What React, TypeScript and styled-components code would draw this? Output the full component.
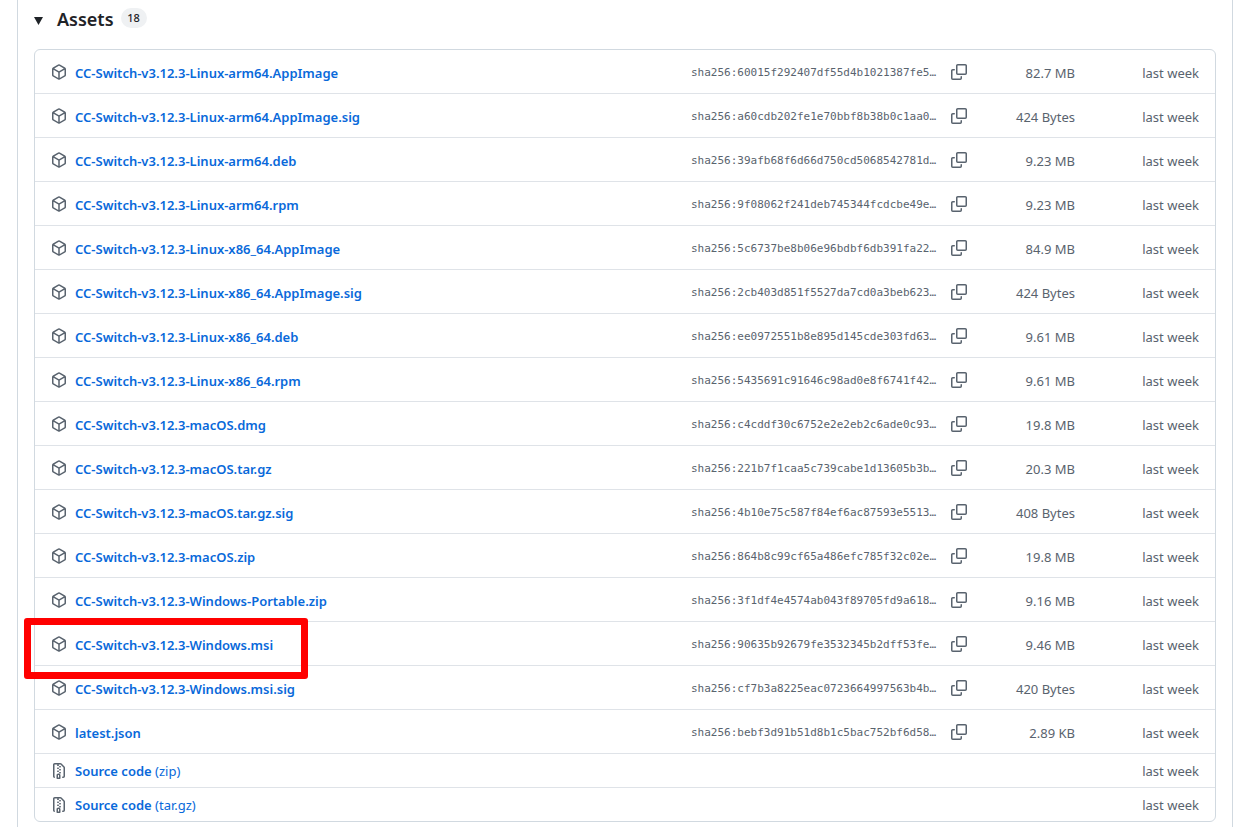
import React from "react";
import styled, { createGlobalStyle } from "styled-components";

const GlobalStyle = createGlobalStyle`
  *, *::before, *::after { box-sizing: border-box; }
  body {
    margin: 0;
    background: #ffffff;
    color: #1f2328;
    font-family: "Noto Sans", sans-serif;
    font-size: 13px;
    line-height: 20px;
  }
`;

const Release = styled.section`
  margin: 0 15px 0 17px;
  padding: 0 16px 16px;
  border: solid #d1d9e0;
  border-width: 0 1px;
`;

const Summary = styled.summary`
  display: flex;
  align-items: center;
  height: 36px;
  margin-bottom: 13px;
  cursor: pointer;
  list-style: none;
  &::-webkit-details-marker { display: none; }
`;

const Caret = styled.svg`
  width: 9px;
  height: 8px;
  margin: 6px 14px 0 0;
  fill: #1f2328;
`;

const Title = styled.h3`
  margin: 2px 7px 0 0;
  font-size: 18px;
  line-height: 28px;
  font-weight: 600;
`;

const Counter = styled.span`
  min-width: 26px;
  padding: 0 6px;
  border-radius: 10px;
  background: #eff1f3;
  font-size: 11px;
  font-weight: 500;
  text-align: center;
`;

const Card = styled.div`
  border: 1px solid #d1d9e0;
  border-radius: 6px;
`;

const Table = styled.table`
  width: 100%;
  table-layout: fixed;
  border-collapse: separate;
  border-spacing: 0;
`;

const Column = styled.col<{ $width?: number }>`
  width: ${(p) => (p.$width ? `${p.$width}px` : "auto")};
`;

const Row = styled.tr<{ $compact?: boolean }>`
  height: ${(p) => (p.$compact ? 34 : 44)}px;
  &:last-child { height: 33px; }
  &:not(:last-child) > td { border-bottom: 1px solid #dfe3e8; }
`;

const Cell = styled.td<{ $end?: boolean }>`
  position: relative;
  padding: 0 ${(p) => (p.$end ? 16 : 0)}px 0 0;
  color: #59636e;
  text-align: right;
  white-space: nowrap;
`;

const TextCell = styled(Cell)`
  padding-top: 2px;
`;

const NameCell = styled(Cell)`
  padding-left: 16px;
  text-align: left;
`;

const NameGroup = styled.div`
  display: flex;
  align-items: center;
  gap: 8px;
`;

const Icon = styled.svg`
  display: block;
  flex: none;
  width: 16px;
  height: 16px;
  fill: #59636e;
`;

const AssetLink = styled.a<{ $compact?: boolean }>`
  padding-top: ${(p) => (p.$compact ? 0 : 2)}px;
  color: #0969da;
  text-decoration: none;
  &:hover { text-decoration: underline; }
`;

const Name = styled.span`
  font-weight: 600;
`;

const DigestCell = styled(TextCell)`
  text-align: left;
  font-family: "DejaVu Sans Mono", monospace;
  font-size: 11px;
`;

const CopyButton = styled.button`
  display: block;
  padding: 0;
  border: 0;
  background: transparent;
  cursor: pointer;
`;

const Highlight = styled.span`
  position: absolute;
  top: -4px;
  left: -11px;
  z-index: 1;
  width: 284px;
  height: 61px;
  border: 7px solid #ff0000;
  border-radius: 3px;
  pointer-events: none;
`;

const PackageIcon = () => (
  <Icon viewBox="0 0 16 16" aria-hidden="true">
    <path d="m8.878.392 5.25 3.045c.54.314.872.89.872 1.514v6.098a1.75 1.75 0 0 1-.872 1.514l-5.25 3.045a1.75 1.75 0 0 1-1.756 0l-5.25-3.045A1.75 1.75 0 0 1 1 11.049V4.951c0-.624.332-1.201.872-1.514L7.122.392a1.75 1.75 0 0 1 1.756 0ZM7.875 1.69l-4.63 2.685L8 7.133l4.755-2.758-4.63-2.685a.248.248 0 0 0-.25 0ZM2.5 5.677v5.372c0 .09.047.171.125.216l4.625 2.683V8.432Zm6.25 8.271 4.625-2.683a.25.25 0 0 0 .125-.216V5.677L8.75 8.432Z" />
  </Icon>
);

const ZipIcon = () => (
  <Icon viewBox="0 0 16 16" aria-hidden="true">
    <path d="M3.5 1.75v11.5c0 .09.048.173.126.217a.75.75 0 0 1-.752 1.298A1.748 1.748 0 0 1 2 13.25V1.75C2 .784 2.784 0 3.75 0h5.586c.464 0 .909.185 1.237.513l2.914 2.914c.329.328.513.773.513 1.237v8.586A1.75 1.75 0 0 1 12.25 15h-.5a.75.75 0 0 1 0-1.5h.5a.25.25 0 0 0 .25-.25V4.664a.25.25 0 0 0-.073-.177L9.513 1.573a.25.25 0 0 0-.177-.073H7.25a.75.75 0 0 1 0 1.5h-.5a.75.75 0 0 1 0-1.5h-3a.25.25 0 0 0-.25.25Zm3.75 8.75h.5c.966 0 1.75.784 1.75 1.75v3a.75.75 0 0 1-.75.75h-2.5a.75.75 0 0 1-.75-.75v-3c0-.966.784-1.75 1.75-1.75ZM6 5.25a.75.75 0 0 1 .75-.75h.5a.75.75 0 0 1 0 1.5h-.5A.75.75 0 0 1 6 5.25Zm.75 2.25h.5a.75.75 0 0 1 0 1.5h-.5a.75.75 0 0 1 0-1.5ZM8 6.75A.75.75 0 0 1 8.75 6h.5a.75.75 0 0 1 0 1.5h-.5A.75.75 0 0 1 8 6.75ZM8.75 3h.5a.75.75 0 0 1 0 1.5h-.5a.75.75 0 0 1 0-1.5ZM8 9.75A.75.75 0 0 1 8.75 9h.5a.75.75 0 0 1 0 1.5h-.5A.75.75 0 0 1 8 9.75Zm-1 2.5v2.25h1v-2.25a.25.25 0 0 0-.25-.25h-.5a.25.25 0 0 0-.25.25Z" />
  </Icon>
);

const CopyIcon = () => (
  <Icon viewBox="0 0 16 16" aria-hidden="true">
    <path d="M0 6.75C0 5.784.784 5 1.75 5h1.5a.75.75 0 0 1 0 1.5h-1.5a.25.25 0 0 0-.25.25v7.5c0 .138.112.25.25.25h7.5a.25.25 0 0 0 .25-.25v-1.5a.75.75 0 0 1 1.5 0v1.5A1.75 1.75 0 0 1 9.25 16h-7.5A1.75 1.75 0 0 1 0 14.25Z" />
    <path d="M5 1.75C5 .784 5.784 0 6.75 0h7.5C15.216 0 16 .784 16 1.75v7.5A1.75 1.75 0 0 1 14.25 11h-7.5A1.75 1.75 0 0 1 5 9.25Zm1.75-.25a.25.25 0 0 0-.25.25v7.5c0 .138.112.25.25.25h7.5a.25.25 0 0 0 .25-.25v-7.5a.25.25 0 0 0-.25-.25Z" />
  </Icon>
);

interface Asset {
  name: string;
  digest: string;
  size: string;
  highlighted?: boolean;
}

const assets: Asset[] = [
  { name: "CC-Switch-v3.12.3-Linux-arm64.AppImage", digest: "60015f292407df55d4b1021387fe5", size: "82.7 MB" },
  { name: "CC-Switch-v3.12.3-Linux-arm64.AppImage.sig", digest: "a60cdb202fe1e70bbf8b38b0c1aa0", size: "424 Bytes" },
  { name: "CC-Switch-v3.12.3-Linux-arm64.deb", digest: "39afb68f6d66d750cd5068542781d", size: "9.23 MB" },
  { name: "CC-Switch-v3.12.3-Linux-arm64.rpm", digest: "9f08062f241deb745344fcdcbe49e", size: "9.23 MB" },
  { name: "CC-Switch-v3.12.3-Linux-x86_64.AppImage", digest: "5c6737be8b06e96bdbf6db391fa22", size: "84.9 MB" },
  { name: "CC-Switch-v3.12.3-Linux-x86_64.AppImage.sig", digest: "2cb403d851f5527da7cd0a3beb623", size: "424 Bytes" },
  { name: "CC-Switch-v3.12.3-Linux-x86_64.deb", digest: "ee0972551b8e895d145cde303fd63", size: "9.61 MB" },
  { name: "CC-Switch-v3.12.3-Linux-x86_64.rpm", digest: "5435691c91646c98ad0e8f6741f42", size: "9.61 MB" },
  { name: "CC-Switch-v3.12.3-macOS.dmg", digest: "c4cddf30c6752e2e2eb2c6ade0c93", size: "19.8 MB" },
  { name: "CC-Switch-v3.12.3-macOS.tar.gz", digest: "221b7f1caa5c739cabe1d13605b3b", size: "20.3 MB" },
  { name: "CC-Switch-v3.12.3-macOS.tar.gz.sig", digest: "4b10e75c587f84ef6ac87593e5513", size: "408 Bytes" },
  { name: "CC-Switch-v3.12.3-macOS.zip", digest: "864b8c99cf65a486efc785f32c02e", size: "19.8 MB" },
  { name: "CC-Switch-v3.12.3-Windows-Portable.zip", digest: "3f1df4e4574ab043f89705fd9a618", size: "9.16 MB" },
  { name: "CC-Switch-v3.12.3-Windows.msi", digest: "90635b92679fe3532345b2dff53fe", size: "9.46 MB", highlighted: true },
  { name: "CC-Switch-v3.12.3-Windows.msi.sig", digest: "cf7b3a8225eac0723664997563b4b", size: "420 Bytes" },
  { name: "latest.json", digest: "bebf3d91b51d8b1c5bac752bf6d58", size: "2.89 KB" },
];

const archives = ["zip", "tar.gz"];

export default function App() {
  return (
    <Release>
      <GlobalStyle />
      <details open>
        <Summary>
          <Caret viewBox="0 0 9 8" aria-hidden="true">
            <path d="M0 0h9L4.5 8Z" />
          </Caret>
          <Title>Assets</Title>
          <Counter>{assets.length + archives.length}</Counter>
        </Summary>
        <Card>
          <Table aria-label="Assets">
            <colgroup>
              <Column />
              <Column $width={260} />
              <Column $width={28} />
              <Column $width={96} />
              <Column $width={140} />
            </colgroup>
            <tbody>
              {assets.map((asset) => (
                <Row key={asset.name}>
                  <NameCell>
                    <NameGroup>
                      <PackageIcon />
                      <AssetLink href={`#${asset.name}`}>
                        <Name>{asset.name}</Name>
                      </AssetLink>
                    </NameGroup>
                    {asset.highlighted && <Highlight />}
                  </NameCell>
                  <DigestCell>{`sha256:${asset.digest}…`}</DigestCell>
                  <Cell>
                    <CopyButton type="button" aria-label={`Copy digest of ${asset.name}`}>
                      <CopyIcon />
                    </CopyButton>
                  </Cell>
                  <TextCell>{asset.size}</TextCell>
                  <TextCell $end>last week</TextCell>
                </Row>
              ))}
              {archives.map((format) => (
                <Row key={format} $compact>
                  <NameCell colSpan={4}>
                    <NameGroup>
                      <ZipIcon />
                      <AssetLink href={`#source-${format}`} $compact>
                        <Name>Source code</Name> ({format})
                      </AssetLink>
                    </NameGroup>
                  </NameCell>
                  <Cell $end>last week</Cell>
                </Row>
              ))}
            </tbody>
          </Table>
        </Card>
      </details>
    </Release>
  );
}
